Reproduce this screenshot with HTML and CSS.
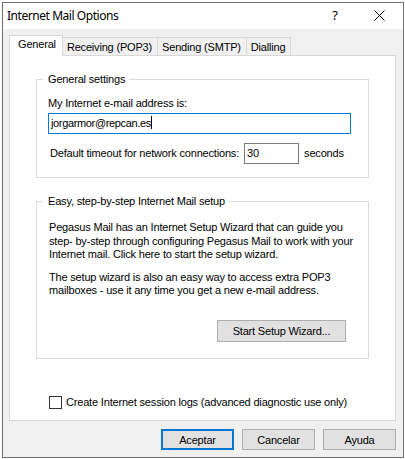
FILE: index.html
```html
<!DOCTYPE html>
<html>
<head>
<meta charset="utf-8">
<title>Internet Mail Options</title>
<link rel="stylesheet" href="styles.css">
</head>
<body>
<div class="window">
  <div class="titlebar">
    <span class="title">Internet Mail Options</span>
    <span class="help">?</span>
    <svg class="close" width="11" height="11" viewBox="0 0 11 11"><path d="M0.5 0.5 L10.5 10.5 M10.5 0.5 L0.5 10.5" stroke="#000" stroke-width="1" fill="none"/></svg>
  </div>
  <div class="dialog">
    <div class="tabs">
      <div class="tab selected">General</div>
      <div class="tab">Receiving (POP3)</div>
      <div class="tab">Sending (SMTP)</div>
      <div class="tab">Dialling</div>
    </div>
    <div class="panel">
      <fieldset class="group group-general">
        <legend>General settings</legend>
        <div class="label">My Internet e-mail address is:</div>
        <div class="field field-email focused">jorgarmor@repcan.es<span class="caret"></span></div>
        <div class="timeout-row">
          <span class="label">Default timeout for network connections:</span>
          <div class="field field-timeout">30</div>
          <span class="label">seconds</span>
        </div>
      </fieldset>
      <fieldset class="group group-setup">
        <legend>Easy, step-by-step Internet Mail setup</legend>
        <p class="para">Pegasus Mail has an Internet Setup Wizard that can guide you<br>step- by-step through configuring Pegasus Mail to work with your<br>Internet mail. Click here to start the setup wizard.</p>
        <p class="para para-second">The setup wizard is also an easy way to access extra POP3<br>mailboxes - use it any time you get a new e-mail address.</p>
        <div class="wizard-row">
          <div class="button wizard">Start Setup Wizard...</div>
        </div>
      </fieldset>
      <div class="check-row">
        <span class="checkbox"></span>
        <span class="label">Create Internet session logs (advanced diagnostic use only)</span>
      </div>
    </div>
    <div class="buttons">
      <div class="button default">Aceptar</div>
      <div class="button">Cancelar</div>
      <div class="button">Ayuda</div>
    </div>
  </div>
</div>
</body>
</html>
```

FILE: styles.css
```css
html, body {
  margin: 0;
  padding: 0;
  background: #ffffff;
}

body {
  width: 405px;
  height: 459px;
  overflow: hidden;
}

.window {
  margin: 2px 1px 1px 2px;
  width: 402px;
  box-sizing: border-box;
  border: 1px solid #717171;
  background: #f0f0f0;
  font-family: "Liberation Sans", Arial, sans-serif;
  font-size: 11px;
  letter-spacing: -0.18px;
  color: #000;
}

.titlebar {
  height: 26px;
  background: #ffffff;
  display: flex;
  align-items: center;
  padding: 0 0 2px 4px;
  box-sizing: border-box;
  font-family: "Noto Sans", "Open Sans", sans-serif;
  font-size: 12px;
  letter-spacing: -0.45px;
}

.title {
  flex: 1;
}

.help {
  font-size: 13px;
  margin-right: 36px;
  letter-spacing: 0;
}

.close {
  margin-right: 18px;
  margin-top: 1px;
}

.dialog {
  height: 428px;
  padding-top: 6px;
  box-sizing: border-box;
  display: flex;
  flex-direction: column;
}

.tabs {
  display: flex;
  align-items: flex-end;
  margin-left: 6px;
  height: 20px;
}

.tab {
  height: 18px;
  box-sizing: border-box;
  border: 1px solid #d9d9d9;
  border-bottom: none;
  margin-left: -1px;
  padding: 3px 5px 0 4px;
  line-height: 13px;
  background: #f0f0f0;
  white-space: nowrap;
}

.tab.selected {
  height: 21px;
  margin-left: 0;
  margin-bottom: -1px;
  padding: 2px 6px 0 8px;
  background: #ffffff;
  z-index: 1;
}

.panel {
  margin: 0 7px 0 6px;
  height: 366px;
  box-sizing: border-box;
  border: 1px solid #d9d9d9;
  background: #ffffff;
  display: flex;
  flex-direction: column;
}

.group {
  margin: 17px 26px 0 26px;
  padding: 0 11px;
  border: 1px solid #dcdcdc;
  min-width: 0;
}

.group legend {
  margin-left: -5px;
  padding: 0 4px 0 5px;
  line-height: 13px;
}

.label {
  line-height: 13px;
  white-space: nowrap;
}

.group-general {
  padding-top: 11px;
  padding-bottom: 13px;
}

.field {
  height: 21px;
  box-sizing: border-box;
  border: 1px solid #7a7a7a;
  padding: 0 2px;
  line-height: 19px;
  background: #fff;
  white-space: nowrap;
}

.field.focused {
  border-color: #0078d7;
}

.field-email {
  margin-top: 3px;
  width: 303px;
  letter-spacing: -0.35px;
}

.caret {
  display: inline-block;
  width: 1px;
  height: 13px;
  background: #000;
  vertical-align: -2px;
}

.timeout-row {
  margin-top: 9px;
  display: flex;
  align-items: center;
  gap: 5px;
  padding-left: 2px;
}

.field-timeout {
  width: 55px;
}

.group-setup {
  padding-top: 13px;
  padding-bottom: 16px;
}

.para {
  margin: 0;
  line-height: 13.5px;
  white-space: nowrap;
  padding-left: 1px;
}

.para-second {
  margin-top: 9px;
}

.wizard-row {
  display: flex;
  justify-content: flex-end;
  margin-top: 22px;
  padding-right: 11px;
}

.button {
  height: 21px;
  box-sizing: border-box;
  border: 1px solid #adadad;
  background: #e1e1e1;
  display: flex;
  align-items: center;
  justify-content: center;
  white-space: nowrap;
}

.wizard {
  width: 129px;
  height: 22px;
}

.check-row {
  margin: 37px 0 0 39px;
  display: flex;
  align-items: center;
  gap: 4px;
}

.checkbox {
  width: 13px;
  height: 13px;
  box-sizing: border-box;
  border: 1px solid #333333;
  background: #fff;
}

.buttons {
  display: flex;
  justify-content: flex-end;
  gap: 8px;
  margin-top: 8px;
  padding-right: 7px;
}

.buttons .button {
  width: 73px;
}

.button.default {
  border: 2px solid #0078d7;
}
```
